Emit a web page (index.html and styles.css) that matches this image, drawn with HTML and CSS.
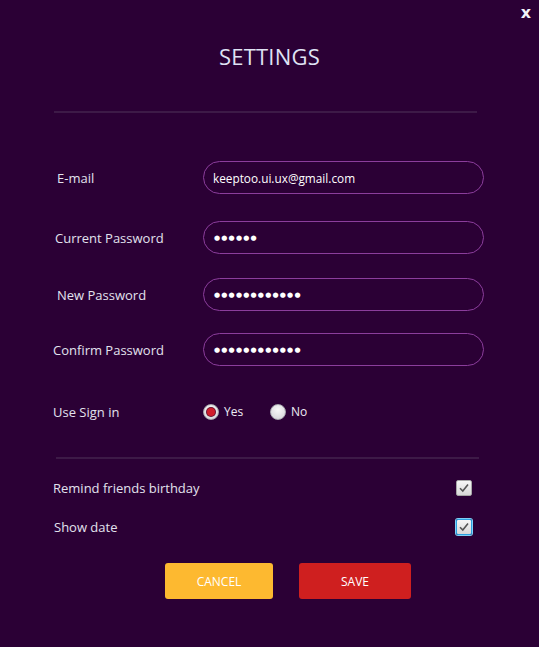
FILE: index.html
```html
<!DOCTYPE html>
<html>
<head>
<meta charset="utf-8">
<link rel="stylesheet" href="styles.css">
</head>
<body>
<div class="dialog">
  <button class="close">x</button>
  <h1 class="title">SETTINGS</h1>
  <div class="rule rule-top"></div>

  <div class="row row-email">
    <label class="label l-email">E-mail</label>
    <div class="field">keeptoo.ui.ux@gmail.com</div>
  </div>
  <div class="row row-current">
    <label class="label l-current">Current Password</label>
    <div class="field dots">●●●●●●</div>
  </div>
  <div class="row row-new">
    <label class="label l-new">New Password</label>
    <div class="field dots">●●●●●●●●●●●●</div>
  </div>
  <div class="row row-confirm">
    <label class="label l-confirm">Confirm Password</label>
    <div class="field dots">●●●●●●●●●●●●</div>
  </div>
  <div class="row row-sign">
    <label class="label l-sign">Use Sign in</label>
    <div class="radios">
      <span class="radio-item"><span class="radio checked"></span><span class="radio-text">Yes</span></span>
      <span class="radio-item"><span class="radio"></span><span class="radio-text">No</span></span>
    </div>
  </div>

  <div class="rule rule-mid"></div>

  <div class="check-row row-remind">
    <span class="check-label">Remind friends birthday</span>
    <span class="checkbox"><svg viewBox="0 0 16 16" width="16" height="16"><path d="M4 8.2 L6.8 11 L12 4.6" fill="none" stroke="#555" stroke-width="1.6"/></svg></span>
  </div>
  <div class="check-row row-date">
    <span class="check-label l-date">Show date</span>
    <span class="checkbox focused"><svg viewBox="0 0 16 16" width="16" height="16"><path d="M4 8.2 L6.8 11 L12 4.6" fill="none" stroke="#555" stroke-width="1.6"/></svg></span>
  </div>

  <div class="buttons">
    <button class="btn btn-cancel">CANCEL</button>
    <button class="btn btn-save">SAVE</button>
  </div>
</div>
</body>
</html>
```

FILE: styles.css
```css
html, body {
  margin: 0;
  padding: 0;
  background: #2b0035;
}
body {
  font-family: "Open Sans", "Noto Sans", sans-serif;
  color: #e4e4f0;
}
.dialog {
  position: relative;
  width: 539px;
  height: 647px;
  overflow: hidden;
}
.close {
  position: absolute;
  top: 2px;
  right: 8px;
  background: none;
  border: none;
  padding: 0;
  color: #f2f2f8;
  font-family: "DejaVu Sans", sans-serif;
  font-weight: bold;
  font-size: 16px;
  line-height: 22px;
}
.title {
  margin: 0;
  padding-top: 41px;
  text-align: center;
  font-size: 22px;
  line-height: 30px;
  font-weight: 400;
  color: #dfe2f4;
  letter-spacing: 0.2px;
}
.rule {
  height: 2px;
  background: #3d1a47;
  width: 423px;
}
.rule-top {
  margin: 40px 0 0 54px;
}
.rule-mid {
  margin: 29px 0 0 56px;
}
.row {
  display: grid;
  grid-template-columns: 148px 281px;
  align-items: center;
  padding-left: 55px;
}
.row-email { margin-top: 48px; }
.row-current { margin-top: 27px; }
.row-new { margin-top: 24px; }
.row-confirm { margin-top: 22px; }
.row-sign { margin-top: 29px; height: 33px; }
.label {
  font-size: 13px;
  color: #e2e2ee;
}
.l-email { padding-left: 2px; }
.l-new { padding-left: 2px; }
.l-confirm { margin-left: -2px; }
.l-sign { margin-left: -2px; }
.field {
  box-sizing: border-box;
  height: 33px;
  border: 1px solid #8b3d9c;
  border-radius: 17px;
  padding-left: 9px;
  display: flex;
  align-items: center;
  font-size: 11.8px;
  color: #ffffff;
}
.dots {
  font-family: "DejaVu Sans", sans-serif;
  font-size: 7px;
  letter-spacing: 1.2px;
  padding-left: 10px;
}
.radios {
  display: flex;
  align-items: center;
}
.radio-item {
  display: flex;
  align-items: center;
  width: 67px;
}
.radio {
  box-sizing: border-box;
  width: 16px;
  height: 16px;
  border-radius: 50%;
  background: radial-gradient(circle at 50% 35%, #f8f8f8, #d2d2d6);
  border: 1px solid #a9a9b0;
  display: flex;
  align-items: center;
  justify-content: center;
}
.radio.checked::after {
  content: "";
  width: 8px;
  height: 8px;
  border-radius: 50%;
  background: #d11e2c;
  box-shadow: 0 0 0 1px #6a1030;
}
.radio-text {
  margin-left: 5px;
  font-size: 12px;
  color: #ececf4;
}
.check-row {
  display: flex;
  justify-content: space-between;
  align-items: center;
  width: 419px;
  padding-left: 53px;
  height: 20px;
}
.row-remind { margin-top: 19px; }
.row-date { margin-top: 19px; }
.check-label {
  font-size: 13px;
  color: #e2e2ee;
}
.l-date { padding-left: 1px; }
.checkbox {
  box-sizing: border-box;
  width: 16px;
  height: 16px;
  border: 1px solid #a6a6a6;
  border-radius: 2px;
  background: linear-gradient(#f6f6f6, #d8d8d8);
  display: flex;
  align-items: center;
  justify-content: center;
}
.checkbox svg { display: block; flex: none; }
.checkbox.focused {
  border: 1px solid #2aa0e0;
  box-shadow: 0 0 0 1px #7fd0f5;
}
.buttons {
  display: flex;
  gap: 26px;
  padding-left: 165px;
  margin-top: 26px;
}
.btn {
  height: 36px;
  border: none;
  border-radius: 3px;
  color: #ffffff;
  font-family: "Open Sans", sans-serif;
  font-size: 12px;
  padding: 0;
}
.btn-cancel {
  width: 108px;
  background: #fdb930;
}
.btn-save {
  width: 112px;
  background: #cf1f1f;
}
```
